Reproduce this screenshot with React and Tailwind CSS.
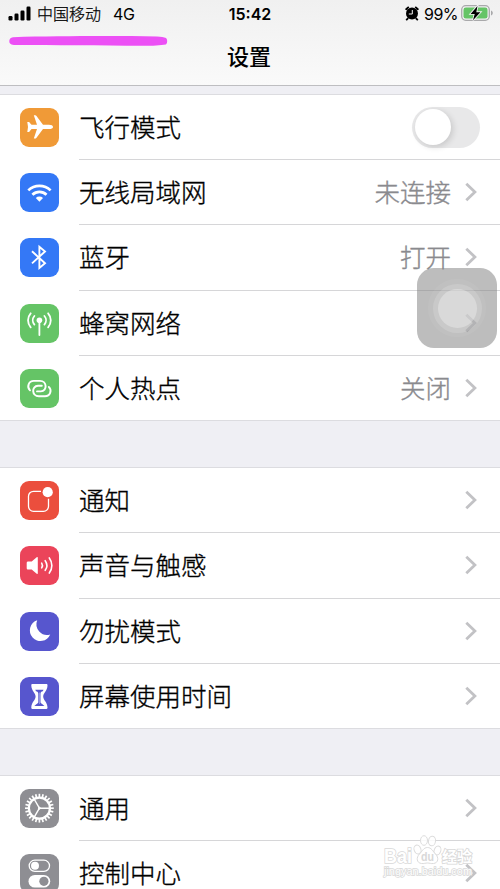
const PlaneIcon = () => (
  <path
    fill="#fff"
    d="M33 18.9c0 1.3-1.7 2.1-4 2.1h-6L16.300 29.900c-.3.4-.6.5-1 .5h-1.500L17 21h-5.500l-2.400 2.900H7.300l.7-5-.7-5h1.800l2.400 2.900H17L13.800 7.300h1.500c.4 0 .7.2 1 .5L23 16.800h6c2.300 0 4 .8 4 2.100z"
  />
);

const WifiIcon = () => (
  <>
    <g fill="none" stroke="#fff" strokeWidth="2.700">
      <path d="M8.300 17.400a15.800 15.800 0 0 1 22.300 0" />
      <path d="M12.400 21.800a10 10 0 0 1 14.100 0" />
    </g>
    <path fill="#fff" d="M15.800 25a5.200 5.200 0 0 1 7.200 0l-3.600 3.700z" />
  </>
);

const BluetoothIcon = () => (
  <path
    fill="none"
    stroke="#fff"
    strokeWidth="1.900"
    d="M12 13.300l13 11.900-5.600 4.700V8.800l5.600 4.700L12 25.400"
  />
);

const CellularIcon = () => (
  <>
    <circle cx="19.400" cy="16.300" r="2.800" fill="#fff" />
    <g fill="none" stroke="#fff" strokeWidth="1.800" strokeLinecap="round">
      <path d="M19.400 17v14" />
      <path d="M14.400 12a6.500 6.500 0 0 0 0 8.600M24.400 12a6.500 6.500 0 0 1 0 8.600" />
      <path d="M10.700 9.300a10.500 10.500 0 0 0 0 14M28.100 9.300a10.500 10.500 0 0 1 0 14" />
    </g>
  </>
);

const HotspotIcon = () => (
  <g fill="none" stroke="#fff" strokeWidth="1.900" strokeLinecap="round">
    <path d="M10 21.300C6.500 17.800 8.600 11.900 13.800 11.900h6.200c7.100 0 7.600 10.200.8 10.500h-3.800" />
    <path d="M28.800 17.900c3.500 3.500 1.400 9.400-3.800 9.400h-6.200c-7.100 0-7.600-10.200-.8-10.500h3.800" />
  </g>
);

const NotificationIcon = () => (
  <>
    <path
      fill="none"
      stroke="#fff"
      strokeWidth="1.300"
      d="M21 10.300h-7.500a5 5 0 0 0-5 5v10a5 5 0 0 0 5 5h10a5 5 0 0 0 5-5V17.800"
    />
    <circle cx="27.700" cy="11.200" r="5.100" fill="#fff" />
  </>
);

const SoundIcon = () => (
  <>
    <path fill="#fff" d="M8.200 15.500h3.500l5-4.300c.6-.5 1.100-.3 1.100.5v15.600c0 .8-.5 1-1.100.5l-5-4.300H8.200c-1 0-1.500-.5-1.500-1.500v-5c0-1 .5-1.500 1.500-1.500z" />
    <g fill="none" stroke="#fff" strokeWidth="1.600" strokeLinecap="round">
      <path d="M21.700 17.100a4.500 4.500 0 0 1 0 4.800" />
      <path d="M25.200 14.700a8.300 8.300 0 0 1 0 9.600" />
      <path d="M29.300 11.900a12.600 12.600 0 0 1 0 15.200" />
    </g>
  </>
);

const MoonIcon = () => (
  <path fill="#fff" d="M17.200 8.300a10.600 10.600 0 1 0 13 14.200A10.700 10.700 0 0 1 17.200 8.300z" />
);

const HourglassIcon = () => (
  <>
    <path
      fill="#fff"
      d="M12.300 7h14.200c.8 0 1 .6 1 1.400-.2 5.500-4.300 7.400-4.300 11.200s4.100 5.400 4.300 10.900c0 .8-.2 1.400-1 1.400H12.300c-.8 0-1-.6-1-1.400.2-5.500 4.300-7.100 4.300-10.900S11.500 13.900 11.300 8.400c0-.8.200-1.400 1-1.400z"
    />
    <path
      fill="#5756ce"
      d="M15.300 12.800h8.200l-.7 1.500c-1.400.2-2.300 1.100-2.300 2.400V25.500c.9 1.500 3 2.200 4 3.600H14.300c1-1.400 3.100-2.100 4-3.600V16.700c0-1.300-.9-2.200-2.300-2.400z"
    />
    <path fill="#fff" fillOpacity="0.5" d="M19.100 15.500h.7V27h-.7z" />
  </>
);

const teeth = Array.from({ length: 24 }, (_, i) => i * 15);

const GearIcon = () => (
  <g fill="none" stroke="#fff">
    <circle cx="19.400" cy="19.200" r="10.500" strokeWidth="2.200" />
    <g strokeWidth="1.700">
      {teeth.map((angle) => (
        <path key={angle} d="M19.400 8.300V4.800" transform={`rotate(${angle} 19.400 19.200)`} />
      ))}
    </g>
    <path strokeWidth="1.400" d="M19.400 19.200H30M19.400 19.200l-5.300-9.200M19.400 19.200l-5.300 9.200" />
    <circle cx="19.400" cy="19.200" r="1" fill="#fff" />
  </g>
);

const ControlIcon = () => (
  <>
    <rect x="9.200" y="6.200" width="20.300" height="11.200" rx="5.600" fill="none" stroke="#fff" strokeWidth="1.300" />
    <circle cx="15" cy="11.800" r="4" fill="#fff" />
    <rect x="8.500" y="21" width="21.700" height="12.600" rx="6.300" fill="#fff" />
    <circle cx="23.900" cy="27.300" r="4.600" fill="#8e8e93" />
  </>
);

const groups = [
  [
    { title: '飞行模式', icon: PlaneIcon, color: 'bg-[#f09a37]', toggle: true },
    { title: '无线局域网', icon: WifiIcon, color: 'bg-[#3478f6]', value: '未连接' },
    { title: '蓝牙', icon: BluetoothIcon, color: 'bg-[#3478f6]', value: '打开' },
    { title: '蜂窝网络', icon: CellularIcon, color: 'bg-[#65c466]' },
    { title: '个人热点', icon: HotspotIcon, color: 'bg-[#65c466]', value: '关闭' },
  ],
  [
    { title: '通知', icon: NotificationIcon, color: 'bg-[#eb4e3d]' },
    { title: '声音与触感', icon: SoundIcon, color: 'bg-[#eb445a]' },
    { title: '勿扰模式', icon: MoonIcon, color: 'bg-[#5756ce]' },
    { title: '屏幕使用时间', icon: HourglassIcon, color: 'bg-[#5756ce]' },
  ],
  [
    { title: '通用', icon: GearIcon, color: 'bg-[#8e8e93]' },
    { title: '控制中心', icon: ControlIcon, color: 'bg-[#8e8e93]' },
  ],
];

const Chevron = () => (
  <svg className="ml-[14px] mr-[2px] h-5 w-[12px]" viewBox="0 0 12 20" fill="none" stroke="#c2c2c5" strokeWidth="2.800">
    <path d="M1.300 1.700L9.900 10l-8.600 8.300" />
  </svg>
);

const Toggle = () => (
  <div className="mr-[-1px] mt-px h-[41px] w-[68px] rounded-full bg-[#e8e8e9] p-[2.500px]">
    <div className="h-9 w-9 rounded-full bg-white shadow-[2px_2px_6px_rgba(0,0,0,0.14)]" />
  </div>
);

const SettingsRow = ({ item, last }) => (
  <div className={`flex h-[65.25px] pl-5 ${last ? 'border-b border-[#dcdce0]' : ''}`}>
    <div className="mt-[13px] h-[39px] w-[39px] shrink-0">
      <div className={`h-[39px] w-[39px] rounded-[9px] ${item.color}`}>
        <svg viewBox="0 0 39 39" className="h-full w-full">
          <item.icon />
        </svg>
      </div>
    </div>
    <div className={`ml-5 flex flex-1 items-center pr-[21px] ${last ? '' : 'border-b border-[#d6d6d8]'}`}>
      <span className="flex-1 pb-0.5 text-[25.5px] font-light leading-[38px] text-black [-webkit-text-stroke:0.35px_#000]">{item.title}</span>
      {item.value && (
        <span className="pb-0.5 text-[25.5px] font-light leading-[38px] text-[#8a8a8e] [-webkit-text-stroke:0.35px_#8a8a8e]">{item.value}</span>
      )}
      {item.toggle ? <Toggle /> : <Chevron />}
    </div>
  </div>
);

const StatusBar = () => (
  <div className="flex h-7 items-center pl-2 pr-[7px] text-[16px] text-black">
    <svg className="mb-px h-[15px] w-6" viewBox="0 0 24 15">
      <rect x="0.500" y="10" width="4" height="4.500" rx="1.200" />
      <rect x="6.500" y="7.500" width="4" height="7" rx="1.200" />
      <rect x="12.500" y="4.500" width="4" height="10" rx="1.200" />
      <rect x="18.500" y="0.500" width="4" height="14" rx="1.200" />
    </svg>
    <span className="mb-0.5 ml-[5px] w-[65px] font-light [-webkit-text-stroke:0.25px_#000]">中国移动</span>
    <span className="ml-[11px] font-[Inter,sans-serif] tracking-[-0.4px]">4G</span>
    <span className="absolute left-0 w-full text-center font-[Inter,sans-serif] text-[16px] font-semibold">15:42</span>
    <svg className="mb-0.5 ml-auto h-[15px] w-[14px]" viewBox="0 0 14 15">
      <circle cx="7" cy="7.600" r="6" />
      <path d="M1.200 3.200L3.200 1.400M12.800 3.200L10.800 1.400M2.700 12.600l-1 1M11.300 12.600l1 1" stroke="#000" strokeWidth="1.900" strokeLinecap="round" />
      <path d="M7.300 4v4H3.800" fill="none" stroke="#f4f4f4" strokeWidth="1" />
    </svg>
    <span className="ml-[5px] w-[37px] whitespace-nowrap font-[Inter,sans-serif] tracking-[-0.5px]">99%</span>
    <svg className="mb-0.5 h-4 w-8" viewBox="0 0 32 16">
      <rect x="0.700" y="0.700" width="27.600" height="14.600" rx="4" fill="none" stroke="#a9a9ab" strokeWidth="1.300" />
      <rect x="2.500" y="2.500" width="24" height="11" rx="2.300" fill="#65c466" />
      <path d="M30 5.500v5c1.200-.4 1.800-1.300 1.800-2.500S31.200 5.900 30 5.500z" fill="#a9a9ab" />
      <path d="M16.500 1L9.600 8.900h4.100L12 15.200l7.400-8H15.300z" fill="#000" stroke="#f5f5f5" strokeWidth="1.800" paintOrder="stroke" />
    </svg>
  </div>
);

const AssistiveTouch = () => (
  <div className="absolute left-[417px] top-[268px] flex h-20 w-20 items-center justify-center rounded-[17px] bg-[#878787]/55">
    <div className="flex h-[58px] w-[58px] items-center justify-center rounded-full bg-white/5">
      <div className="flex h-[49px] w-[49px] items-center justify-center rounded-full bg-white/15">
        <div className="h-[39px] w-[39px] rounded-full bg-white/30" />
      </div>
    </div>
  </div>
);

const Watermark = () => (
  <svg className="absolute left-[382px] top-[834px] h-[48px] w-[94px]" viewBox="0 0 94 48">
    <g fill="#fff" fillOpacity="0.85" stroke="#dcdcdc" strokeWidth="1">
      <ellipse cx="35.500" cy="15.500" rx="3.400" ry="4.500" transform="rotate(-20 35.500 15.500)" />
      <ellipse cx="42" cy="6.500" rx="3.500" ry="4.800" />
      <ellipse cx="50" cy="7" rx="3.500" ry="4.800" transform="rotate(8 50 7)" />
      <ellipse cx="55.500" cy="16.500" rx="3.300" ry="4.500" transform="rotate(20 55.500 16.500)" />
      <path d="M45.500 13.500c4 0 5.500 4 8 6.500 3.500 3.500 3 9-2 9.500-2.500.3-4-.5-6-.5s-3.500.8-6 .5c-5-.5-5.500-6-2-9.500 2.500-2.500 4-6.500 8-6.500z" />
    </g>
    <g fill="#fff" stroke="#d8d8d8" strokeWidth="1.600" paintOrder="stroke" fontFamily="Liberation Sans, sans-serif">
      <text x="2" y="29" fontSize="20" fontWeight="bold" textLength="28" lengthAdjust="spacingAndGlyphs">Bai</text>
      <text x="39" y="27" fontSize="12.500" textLength="13" lengthAdjust="spacingAndGlyphs" fill="#d8d8d8" stroke="none" fontWeight="bold">du</text>
      <text x="60" y="28" fontSize="15" fontWeight="bold" fontFamily="Noto Sans CJK SC, sans-serif">经验</text>
      <text x="2" y="41" fontSize="10" strokeWidth="1.400" textLength="88" lengthAdjust="spacingAndGlyphs">jingyan.baidu.com</text>
    </g>
  </svg>
);

export default function App() {
  return (
    <div className="relative h-[889px] w-[500px] overflow-hidden bg-[#efeff4] font-['Noto_Sans_CJK_SC',sans-serif]">
      <header className="relative h-[86px] border-b border-[#bebec1] bg-linear-to-b from-[#f0f0f0] to-[#fafafa]">
        <StatusBar />
        <h1 className="pr-[2px] text-center text-[22px] font-medium leading-[54px] text-black">设置</h1>
        <svg className="absolute left-[9px] top-[35px] h-[12px] w-[160px]" viewBox="0 0 160 12">
          <path fill="#ec50f5" d="M4 2.200C50 1 105 .8 148 1.500c4 .1 7 .7 9 1.500 1.700 1.500 1.500 5.500-.2 6.500-5 1-13 1.300-23 1.300C90 10.300 45 10.500 5 10 1 9.500.3 8 .3 6S1.500 2.500 4 2.200z" />
        </svg>
      </header>

      <main className="flex flex-col gap-[46px] pt-[7.75px]">
        {groups.map((group, index) => (
          <section key={index} className="border-t border-[#dcdce0] bg-white">
            {group.map((item, i) => (
              <SettingsRow key={item.title} item={item} last={i === group.length - 1} />
            ))}
          </section>
        ))}
      </main>

      <AssistiveTouch />
      <Watermark />
    </div>
  );
}
